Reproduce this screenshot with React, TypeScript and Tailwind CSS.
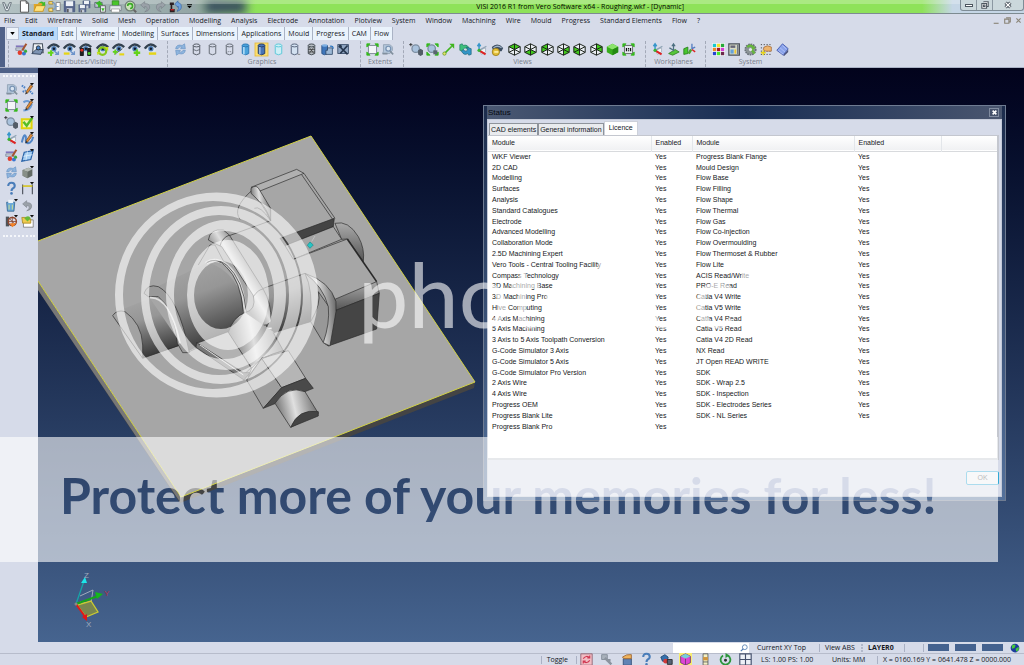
import React, { useState } from "react";

// ───────────────────────────────────────────────
// DATA
// ───────────────────────────────────────────────
const MENUS = [
  "File", "Edit", "Wireframe", "Solid", "Mesh", "Operation", "Modelling", "Analysis", "Electrode",
  "Annotation", "Plotview", "System", "Window", "Machining", "Wire", "Mould", "Progress",
  "Standard Elements", "Flow", "?",
];

const RIBBON_TABS = [
  "Standard", "Edit", "Wireframe", "Modelling", "Surfaces", "Dimensions", "Applications", "Mould",
  "Progress", "CAM", "Flow",
];

const QUICK = ["page", "folder", "merge", "save", "saveAll", "export", "print", "lens", "undo", "redo", "robot"];

const GROUPS = [
  { name: "Attributes/Visibility", width: "w-[159px]", icons: ["brush", "layer", "eyeSwap", "eyeLess", "traffic", "eyeCycle", "eyeBoth", "eyePlus", "eyeMinus"] },
  { name: "Graphics", width: "w-[193px]", icons: ["refresh", "cylWire", "cylPlain", "cylHidden", "cylBlue", "cylShade", "cylGhost", "cylGlass", "cylMesh", "cylStack", "tools"] },
  { name: "Extents", width: "w-[43px]", icons: ["extents", "zoomPart"] },
  { name: "Views", width: "w-[242px]", icons: ["zoomIn", "zoomAll", "pan", "rotate", "axes", "viewEye", "cubeTop", "cubeBottom", "cubeBack", "cubeRight", "cubeLeft", "cubeRear", "cubeFull", "scale"] },
  { name: "Workplanes", width: "w-[60px]", icons: ["axes", "planeGreen", "planeFlip"] },
  { name: "System", width: "w-[94px]", icons: ["palette", "calc", "gear", "gridHand", "book"] },
];

const SIDE_ICONS = [
  "zoomPart", "penDots", "extents", "penArc", "zoomIn", "check", "axes", "penCurve", "brush", "sheet",
  "refresh", "solid", "help", "measure", "bin", "undo", "wheel", "openPage",
];

const STATUS_ICONS = ["stamp", "select", "handBox", "help", "gems", "cubePink", "ruler", "spin", "cross"];

const LEFT_MODULES = [
  "WKF Viewer", "2D CAD", "Modelling", "Surfaces", "Analysis", "Standard Catalogues", "Electrode",
  "Advanced Modelling", "Collaboration Mode", "2.5D Machining Expert",
  "Vero Tools - Central Tooling Facility", "Compass Technology", "3D Machining Base",
  "3D Machining Pro", "Hive Computing", "4 Axis Machining", "5 Axis Machining",
  "3 Axis to 5 Axis Toolpath Conversion", "G-Code Simulator 3 Axis", "G-Code Simulator 5 Axis",
  "G-Code Simulator Pro Version", "2 Axis Wire", "4 Axis Wire", "Progress OEM",
  "Progress Blank Lite", "Progress Blank Pro",
];

const RIGHT_MODULES = [
  "Progress Blank Flange", "Mould Design", "Flow Base", "Flow Filling", "Flow Shape", "Flow Thermal",
  "Flow Gas", "Flow Co-injection", "Flow Overmoulding", "Flow Thermoset & Rubber", "Flow Lite",
  "ACIS Read/Write", "PRO-E Read", "Catia V4 Write", "Catia V5 Write", "Catia V4 Read",
  "Catia V5 Read", "Catia V4 2D Read", "NX Read", "JT Open READ WRITE", "SDK", "SDK - Wrap 2.5",
  "SDK - Inspection", "SDK - Electrodes Series", "SDK - NL Series",
];

// ───────────────────────────────────────────────
// ICON PARTS
// ───────────────────────────────────────────────
const eye = (
  <>
    <path d="M1 7Q8-1 15 6L14 10Q8 13 3 9Z" fill="#dbe6f2" />
    <path d="M1 7Q7-2 15 5" fill="none" stroke="#33414f" strokeWidth="3" />
    <circle cx="8.5" cy="7" r="3.2" fill="#4e7db5" />
    <circle cx="8.5" cy="7" r="1.5" fill="#101c2c" />
  </>
);
const cylinder = (fill: string, line: string, extra?: React.ReactNode) => (
  <>
    <path d="M4 3v10q4 3 8 0V3" fill={fill} stroke={line} strokeWidth="1.2" />
    <ellipse cx="8" cy="3" rx="4" ry="1.8" fill={fill} stroke={line} strokeWidth="1.2" />
    {extra}
  </>
);
const cube = (face: string) => (
  <>
    <path d="M8 1L15 4.5V11.5L8 15L1 11.5V4.5Z" fill="#e9edf2" />
    <path d={face} fill="#41c91c" />
    <path d="M8 1L15 4.5V11.5L8 15L1 11.5V4.5ZM1 4.5L8 8L15 4.5M8 8V15M1 11.5L8 8L15 11.5M8 1V8" fill="none" stroke="#1b221b" strokeWidth="1.2" />
  </>
);
const lens = (
  <>
    <path d="M10 10L14 14" stroke="#586674" strokeWidth="3" />
    <circle cx="7" cy="7" r="4.6" fill="#a9c2dd" stroke="#7b8da0" strokeWidth="1.6" />
  </>
);
const corners = <path d="M1 1h4L1 5ZM15 1v4L11 1ZM1 15v-4L5 15ZM15 15h-4L15 11Z" fill="#35b81e" stroke="#35b81e" />;
const pencil = (
  <>
    <path d="M6 11L12 2L14.5 4L8 12.5Z" fill="#e08a35" stroke="#5b432b" strokeWidth=".8" />
    <path d="M6 11L5 14L8 12.5Z" fill="#222" />
  </>
);
const caret = <path d="M11 0h5L13.5 3Z" fill="#111" />;
const disk = (
  <>
    <rect x="1" y="1" width="14" height="14" rx="1" fill="#55658a" />
    <rect x="3.5" y="1.5" width="9" height="6" fill="#eef2f7" />
    <rect x="4.5" y="10" width="7" height="5" fill="#c5cbd6" />
    <path d="M6 11v4" stroke="#333" strokeWidth="1.5" />
  </>
);

const ICONS: Record<string, React.ReactNode> = {
  page: <path d="M3 1h7l3 3v11H3ZM10 1v3h3" fill="#fff" stroke="#555" strokeWidth="1.2" />,
  folder: (
    <>
      <path d="M1 5h5l1-2h6v11H1Z" fill="#e0a727" />
      <path d="M4 7h11l-3 7H1Z" fill="#ffe27a" stroke="#b98517" strokeWidth=".8" />
      <path d="M7 4q3-4 6-1l2-1v5H10l2-2q-2-2-5-1Z" fill="#3fbb2a" />
    </>
  ),
  merge: (
    <>
      <path d="M1 2h5v3H1ZM1 10h5v4H1Z" fill="#ffe07a" stroke="#a6841d" />
      <path d="M10 3h5v10h-5Z" fill="#fff" stroke="#777" />
      <path d="M5 3q4 0 4 5q0 4-4 4M8 8h5" fill="none" stroke="#7c9cc4" strokeWidth="1.5" />
    </>
  ),
  save: disk,
  saveAll: (
    <>
      <g transform="translate(5 0) scale(.68)">{disk}</g>
      <g transform="translate(0 5) scale(.68)">{disk}</g>
    </>
  ),
  export: (
    <>
      <path d="M1 3h9v6H1Z" fill="#b9c1cc" stroke="#52606f" />
      <path d="M2 4l5-3 4 5H8v3H5V6Z" fill="#39b725" />
      <path d="M8 7h6v8H8Z" fill="#e9edf0" stroke="#555" />
      <path d="M9 10h4l-2 4Z" fill="#39b725" />
    </>
  ),
  print: (
    <>
      <path d="M4 1h8v6H4Z" fill="#49c52b" stroke="#348b20" />
      <path d="M1 7h14v6H1Z" fill="#e7eaee" stroke="#737b85" />
      <path d="M3 11h10v4H3Z" fill="#fff" stroke="#888" strokeWidth=".8" />
    </>
  ),
  lens: (
    <>
      <path d="M11 11L15 15" stroke="#666" strokeWidth="2.5" />
      <circle cx="7.5" cy="7.5" r="6" fill="#c9e2b8" stroke="#728078" strokeWidth="1.6" />
      <path d="M4.5 7.5a3 3 0 1 1 3 3" fill="none" stroke="#3ba827" strokeWidth="2" />
    </>
  ),
  undo: <path d="M2 6L7 2V4.5Q14 4 13 10Q12 14 7 14.5Q11 12 10 9.5Q9 8 7 8V10.5Z" fill="#9aa1a8" stroke="#70777f" strokeWidth=".6" />,
  redo: <path d="M14 6L9 2V4.5Q2 4 3 10Q4 14 9 14.5Q5 12 6 9.5Q7 8 9 8V10.5Z" fill="#9aa1a8" stroke="#70777f" strokeWidth=".6" />,
  robot: (
    <>
      <path d="M1 3h5v3H4v5h3v4H1v-4h1V6H1Z" fill="#2b1f22" />
      <path d="M2 12h4" stroke="#d22" strokeWidth="1.5" />
      <path d="M7 5L11 1V3Q16 4 15 10Q14 13 10 14Q13 10 11 7.5V9Z" fill="#6fa0dd" stroke="#285a9d" strokeWidth=".7" />
    </>
  ),
  brush: (
    <>
      <path d="M1 3h10v2H1Z" fill="#8075bb" />
      <path d="M1 6h10v3H1Z" fill="#ccd2de" stroke="#7d8798" />
      <path d="M14 1L9 9" stroke="#a4532f" strokeWidth="2.5" />
      <circle cx="6" cy="12" r="2.8" fill="#e33c2c" />
      <circle cx="11" cy="13" r="2.4" fill="#3a74d0" />
      <circle cx="13" cy="10" r="1.9" fill="#39a93b" />
    </>
  ),
  layer: (
    <>
      <path d="M3 1h11l1 11H2Z" fill="#eef2f6" stroke="#47515e" strokeWidth="1.3" />
      <path d="M1 13L6 8h9l-3 6Z" fill="#7e93b3" stroke="#26364f" />
      <circle cx="9" cy="6" r="2.5" fill="#4d84c6" stroke="#222" />
    </>
  ),
  eyeSwap: (
    <>
      {eye}
      <path d="M1 12h7M5 9v7" stroke="#63d31c" strokeWidth="2.4" />
      <path d="M9 10l5 4M14 10v4h-4" fill="none" stroke="#6d94cb" strokeWidth="1.6" />
    </>
  ),
  eyeLess: (
    <>
      {eye}
      <path d="M1 13h7" stroke="#e5d515" strokeWidth="2.8" />
      <path d="M9 10l5 4M14 10v4h-4" fill="none" stroke="#6d94cb" strokeWidth="1.6" />
    </>
  ),
  traffic: (
    <>
      {eye}
      <rect x="1" y="6" width="5" height="10" rx="1" fill="#1d2020" />
      <rect x="10" y="6" width="5" height="10" rx="1" fill="#1d2020" />
      <circle cx="3.5" cy="9" r="1.8" fill="#e32d20" />
      <circle cx="12.5" cy="13" r="1.8" fill="#46cd29" />
    </>
  ),
  eyeCycle: (
    <>
      {eye}
      <circle cx="8" cy="10" r="4.5" fill="none" stroke="#86c81a" strokeWidth="2.8" />
      <path d="M10 5h5v5ZM1 11h5l-4 4Z" fill="#c2dd1b" />
    </>
  ),
  eyeBoth: (
    <>
      {eye}
      <path d="M3 14L13 7" stroke="#555" />
      <path d="M1 11h6M4 8v6" stroke="#63d31c" strokeWidth="2.2" />
      <path d="M9 14h6" stroke="#e5d515" strokeWidth="2.6" />
    </>
  ),
  eyePlus: <>{eye}<path d="M11 8v8M7 12h8" stroke="#63d31c" strokeWidth="2.8" /></>,
  eyeMinus: <>{eye}<path d="M6 13h9" stroke="#e5d515" strokeWidth="3" /></>,
  refresh: (
    <>
      <path d="M2 7Q3 1 10 3L13 1L14 7H8L10 5Q6 4 5 7Z" fill="#8eb4de" stroke="#5685b9" strokeWidth=".6" />
      <path d="M14 9Q13 15 6 13L3 15L2 9H8L6 11Q10 12 11 9Z" fill="#8eb4de" stroke="#5685b9" strokeWidth=".6" />
    </>
  ),
  cylWire: cylinder("none", "#555c66", <path d="M4 8q4 3 8 0" fill="none" stroke="#555c66" />),
  cylPlain: cylinder("none", "#656b75"),
  cylHidden: cylinder("none", "#656b75", <path d="M4 12q4-3 8 0" fill="none" stroke="#656b75" strokeDasharray="1.5 1" />),
  cylBlue: cylinder("#4aa3db", "#2c78b5", <path d="M6 5v9" stroke="#b9e1fa" strokeWidth="1.8" />),
  cylShade: (
    <>
      <rect width="16" height="16" fill="#fbdf72" stroke="#e3b739" />
      {cylinder("#4774b6", "#263e69", <path d="M6 5v9" stroke="#a7c6ee" strokeWidth="1.6" />)}
    </>
  ),
  cylGhost: cylinder("#cdeff6", "#5cc7d8"),
  cylGlass: cylinder("#d3e1f1", "#56637a", <path d="M12 14h3" stroke="#777" />),
  cylMesh: cylinder("#b6bbc1", "#424a52", <path d="M5 5l6 8M11 5l-6 8M4 8h8M4 11h8" stroke="#333" strokeWidth=".8" />),
  cylStack: (
    <>
      <path d="M1 3v10q3 3 7 0V3Z" fill="#3f76bb" stroke="#274f83" />
      <ellipse cx="4.5" cy="3" rx="3.5" ry="1.5" fill="#7eafe2" />
      <path d="M8 6h6v8H6V9h2Z" fill="#9db8d6" stroke="#2d4666" />
      <path d="M11 4q4-1 4 3" fill="none" stroke="#2872bd" strokeWidth="1.5" />
    </>
  ),
  tools: (
    <>
      <rect x="1" y="2" width="13" height="11" fill="#90a5c1" stroke="#334764" />
      <path d="M3 4l10 10M13 3L4 13" stroke="#25354d" strokeWidth="2" />
      <circle cx="4" cy="4" r="2" fill="#26364c" />
    </>
  ),
  extents: <><path d="M3 3h10v10H3Z" fill="#f4f6f9" stroke="#6b7885" />{corners}</>,
  zoomPart: (
    <>
      <path d="M3 2h7q5 1 4 7l-3 4H2L3 10Z" fill="#b3c6da" stroke="#8e9fb2" />
      <circle cx="9" cy="7" r="3" fill="#dae5f1" stroke="#7691b2" strokeWidth="1.5" />
      <path d="M11 10l4 4M2 13h6" stroke="#82909e" strokeWidth="2" />
    </>
  ),
  zoomIn: (
    <>
      {lens}
      <path d="M1 0v4M-1 2h4" stroke="#222" />
      <path d="M10 9l3-2 3 2v5l-3 2-3-2Z" fill="#525c67" />
    </>
  ),
  zoomAll: <>{lens}{corners}<path d="M9 9h5v5H9Z" fill="#596570" /></>,
  pan: (
    <>
      <path d="M3 13L12 4" stroke="#3fb51e" strokeWidth="2" />
      <path d="M9 1h6v6Z" fill="#3fb51e" />
      <circle cx="3" cy="13" r="2" fill="#e4e46f" stroke="#6a9b20" />
    </>
  ),
  rotate: (
    <>
      <path d="M1 2v7l6 2-2-3q3-4 6 1l2-1Q11 1 5 3L4 1Z" fill="#3ec07c" stroke="#1d7762" strokeWidth=".8" />
      <path d="M15 14V7L9 5l2 3q-2 4-6 0l-2 2q3 6 8 3l1 2Z" fill="#3295c8" stroke="#1d6376" strokeWidth=".8" />
    </>
  ),
  axes: (
    <>
      <path d="M5 9L13 6L13 11L8 14Z" fill="#f2f5f8" stroke="#a4afbd" />
      <path d="M5 9V2M3 4L5 1L7 4" fill="none" stroke="#3796ca" strokeWidth="1.8" />
      <path d="M5 9L14 4" stroke="#8fa3b5" strokeWidth="1.6" />
      <path d="M5 9L13 14" stroke="#d22" strokeWidth="2.5" />
      <circle cx="5" cy="9" r="2" fill="#37b634" />
    </>
  ),
  viewEye: (
    <>
      <path d="M1 5Q8-2 15 6L13 10H3Z" fill="#3b4c60" />
      <path d="M3 6q5-4 10 0" fill="none" stroke="#9eb3c8" strokeWidth="1.5" />
      <circle cx="6" cy="11" r="4.5" fill="#e3bf3a" stroke="#967713" />
      <path d="M4 11h5" stroke="#fff1a4" strokeWidth="2" />
    </>
  ),
  cubeTop: cube("M8 1L15 4.5L8 8L1 4.5Z"),
  cubeBottom: cube("M1 11.5L8 8L15 11.5L8 15Z"),
  cubeBack: cube("M1 4.5L8 1V8L1 11.5Z"),
  cubeRight: cube("M8 8L15 4.5V11.5L8 15Z"),
  cubeLeft: cube("M1 4.5L8 8V15L1 11.5Z"),
  cubeRear: cube("M8 1L15 4.5V11.5L8 8Z"),
  cubeFull: (
    <>
      <path d="M8 1L15 4.5V11.5L8 15L1 11.5V4.5Z" fill="#36ac1b" />
      <path d="M8 1L15 4.5L8 8L1 4.5Z" fill="#8be36b" />
      <path d="M8 8L15 4.5V11.5L8 15Z" fill="#248a11" />
    </>
  ),
  scale: (
    <>
      <path d="M3 3h10v10H3Z" fill="#e5ebef" stroke="#555" />
      {corners}
      <path d="M5.5 6v4M10.5 6v4M8 6v2M8 9v1" stroke="#111" strokeWidth="1.5" />
    </>
  ),
  planeGreen: (
    <>
      <path d="M2 13L10 8L15 11L7 15Z" fill="#56c63a" stroke="#307f23" />
      <path d="M8 10V2M6 4l2-3 2 3M8 9L3 6" fill="none" stroke="#4d7080" strokeWidth="1.5" />
    </>
  ),
  planeFlip: (
    <>
      <path d="M1 7l5-2v8l-5 1Z" fill="#48c82e" stroke="#267b1c" />
      <path d="M7 13l3-5" stroke="#48a82e" strokeWidth="3" />
      <path d="M11 8V1M11 7l4-2" stroke="#537cc0" strokeWidth="1.6" />
      <path d="M11 8l4 3" stroke="#d22" strokeWidth="1.8" />
    </>
  ),
  palette: (
    <>
      <rect width="16" height="16" fill="#f0f2f4" />
      <path d="M1 1h4v4H1Z" fill="#16c8d0" /><path d="M6 1h4v4H6Z" fill="#eee52e" /><path d="M11 1h4v4h-4Z" fill="#25a838" />
      <path d="M1 6h4v4H1Z" fill="#e98927" /><path d="M6 6h4v4H6Z" fill="#a31b25" /><path d="M11 6h4v4h-4Z" fill="#d63ad6" />
      <path d="M1 11h4v4H1Z" fill="#2542d2" /><path d="M6 11h4v4H6Z" fill="#46e52b" /><path d="M11 11h4v4h-4Z" fill="#6b284b" />
    </>
  ),
  calc: (
    <>
      <path d="M1 1h13v14H1Z" fill="#d8dcc8" stroke="#4a505b" strokeWidth="1.5" />
      <path d="M3 3h6v3H3Z" fill="#666677" />
      <path d="M3 8h4v5H3Z" fill="#65a2d9" />
      <path d="M8 8h2v5H8Z" fill="#efc52c" />
      <path d="M12 2v12" stroke="#747b86" strokeWidth="2" />
    </>
  ),
  gear: (
    <>
      <circle cx="8" cy="8" r="6.5" fill="#8b9396" stroke="#687078" strokeDasharray="2 1" strokeWidth="2" />
      <path d="M4 5q4-4 8 1l-3 2 4 5" fill="none" stroke="#65b53c" strokeWidth="3" />
      <circle cx="8" cy="8" r="2" fill="#e5e9ed" />
    </>
  ),
  gridHand: (
    <>
      <path d="M1 2h14M1 6h14M1 10h14M1 14h14" stroke="#333" strokeDasharray="1.5 2" />
      <path d="M5 5q4-3 9 0v5H7L4 8Z" fill="#edb36c" stroke="#996235" strokeWidth=".8" />
      <path d="M4 9v6M1 12h6" stroke="#e7d315" strokeWidth="1.7" />
    </>
  ),
  book: (
    <>
      <path d="M8 1L15 7L9 15L1 9Z" fill="#8aa3ea" stroke="#3b53aa" />
      <path d="M5 6l6 5M8 3l5 5M3 9l6 5" stroke="#b6c5f7" />
      <path d="M9 15L15 8v3l-5 5Z" fill="#48507a" />
    </>
  ),
  penDots: <><path d="M1 3l4 3M2 11l4-2M11 10l4 4" stroke="#4f83c5" strokeWidth="2.5" strokeDasharray="2 1" />{pencil}{caret}</>,
  penArc: <><path d="M3 4q7-4 10 3q-2 7-10 7" fill="none" stroke="#6b9bd5" strokeWidth="2.5" />{pencil}{caret}</>,
  penCurve: <><path d="M1 13q3-13 5-7q-1 10 5 7q3-2 4-7" fill="none" stroke="#5286c6" strokeWidth="2.5" />{pencil}{caret}</>,
  check: (
    <>
      <path d="M1 4h12v11H1Z" fill="#eff4b4" stroke="#e0d40c" strokeWidth="2.5" />
      <path d="M3 7l4 5 7-10" fill="none" stroke="#54bd25" strokeWidth="3" />
      {caret}
    </>
  ),
  sheet: (
    <>
      <path d="M4 4l11-2-3 11-11 2Z" fill="#a4cdf2" stroke="#2963a8" strokeWidth="1.5" />
      <path d="M8 3L6 14M3 9l11-2" stroke="#e2f2fd" />
      {caret}
    </>
  ),
  solid: (
    <>
      <path d="M2 5l7-3 5 2v8l-6 3-6-3Z" fill="#626a64" />
      <path d="M2 5l7-3 5 2-6 3Z" fill="#b4bab4" />
      <path d="M2 5l6 2v8l-6-3Z" fill="#878f88" />
      {caret}
    </>
  ),
  help: (
    <>
      <path d="M4 5q0-4 4-4t4 4q0 2-2.5 3Q8 9 8 11" fill="none" stroke="#4a7db9" strokeWidth="2.6" />
      <circle cx="8" cy="14" r="1.6" fill="#4a7db9" />
    </>
  ),
  measure: <><path d="M2 3v12M14 3v12" stroke="#555b66" strokeWidth="1.5" /><path d="M2 5h12" stroke="#d5c322" strokeWidth="2" />{caret}</>,
  bin: (
    <>
      <path d="M2 4h10l-1 11H3Z" fill="#68a7d8" stroke="#356891" />
      <path d="M4 1h6v4H4Z" fill="#eff5f8" />
      <path d="M5 7v6M9 7v6" stroke="#e6ed80" />
      {caret}
    </>
  ),
  wheel: (
    <>
      <path d="M1 2h4v12H1Z" fill="#4d5359" />
      <circle cx="9" cy="8" r="5" fill="none" stroke="#94492e" strokeWidth="1.8" />
      <path d="M4 8h10M9 2v12M5 4l8 8" stroke="#854732" />
      <path d="M6 10h8l-5 5Z" fill="#f78324" />
      {caret}
    </>
  ),
  openPage: (
    <>
      <path d="M3 6h12v9H3Z" fill="#fff" stroke="#777" />
      <path d="M1 3h6l2 2h3v5H2Z" fill="#efcb4e" stroke="#a98822" />
      <path d="M4 4q5-5 8 0l-4 4Z" fill="#67b939" />
      {caret}
    </>
  ),
  stamp: (
    <>
      <path d="M1 1h14v14H1Z" fill="#f1bdc4" stroke="#8a5a6a" />
      <path d="M4 7q4-5 8-1M12 9q-4 5-8 1M12 3v3H9M4 13v-3h3" fill="none" stroke="#d13852" strokeWidth="1.4" />
    </>
  ),
  select: (
    <>
      <path d="M2 2h7v6H2Z" fill="#a9b1bc" stroke="#7e8794" />
      <path d="M6 6l8 8M8 9h5" stroke="#8c949f" strokeWidth="3" />
    </>
  ),
  handBox: (
    <>
      <path d="M4 7h10v8H4Z" fill="#6083b5" stroke="#304b74" />
      <path d="M3 5q5-4 11-3v5H5Z" fill="#efb35c" stroke="#98602e" />
    </>
  ),
  gems: (
    <>
      <path d="M1 5l5-3 4 3-1 6-6-1Z" fill="#3370ae" stroke="#1f416b" />
      <circle cx="7" cy="10" r="3" fill="#d13b3b" />
      <path d="M9 8h6v6H9Z" fill="#556376" stroke="#222" />
    </>
  ),
  cubePink: (
    <>
      <rect width="16" height="16" fill="#f7ed71" />
      <path d="M8 1l6 3v8l-6 3-6-3V4Z" fill="#df45d5" stroke="#69376b" />
      <path d="M2 4l6 3 6-3-6-3Z" fill="#77ceda" />
      <path d="M8 7v8" stroke="#69376b" />
    </>
  ),
  ruler: (
    <>
      <path d="M5 1h6v14H5Z" fill="#f3f0c5" stroke="#555" />
      <path d="M5 5h6v4H5Z" fill="#cf963f" />
      <path d="M5 11h6" stroke="#555" />
    </>
  ),
  spin: (
    <>
      <path d="M5 3a6 6 0 1 0 6 0" fill="none" stroke="#2d963b" strokeWidth="2.2" />
      <path d="M8 0v6l5-3Z" fill="#2d963b" />
      <circle cx="8" cy="9" r="1.8" fill="#333" />
    </>
  ),
  cross: <path d="M1 1h14v14H1ZM8 1v14M1 8h14" fill="#edf1f7" stroke="#44506b" strokeWidth="1.4" />,
  globe: (
    <>
      <circle cx="8" cy="8" r="7" fill="#1c3c9c" />
      <path d="M3 4q4-3 6 0l-2 4-4 1ZM9 9l5-3v5l-4 3Z" fill="#46c93b" />
    </>
  ),
};

function IconButton({ name }: { name: string }) {
  return (
    <button type="button" aria-label={name} className="flex flex-1 items-center justify-center">
      <svg viewBox="0 0 16 16" className="size-[13px] shrink-0 overflow-visible" aria-hidden="true">
        {ICONS[name]}
      </svg>
    </button>
  );
}

function Separator() {
  return <span className="h-2 w-px shrink-0 bg-[#aab1c4]" />;
}

// ───────────────────────────────────────────────
// TOP BARS
// ───────────────────────────────────────────────
function TitleBar() {
  return (
    <header className="relative flex h-[14px] shrink-0 items-center overflow-hidden border-b border-[#7d8b91] bg-[#8ee259]">
      <div className="absolute inset-0 bg-linear-to-r from-[#b3c1c3] from-0% via-[#93a5a5] via-19% to-transparent to-25%" />
      <div className="absolute inset-y-0 left-[20%] w-[4%] bg-[#33485b] blur-[5px]" />
      <div className="absolute inset-y-0 right-0 w-[10%] bg-linear-to-r from-transparent to-[#c5d6e6] to-30%" />
      <div className="absolute inset-x-0 top-0 h-1 bg-white/25" />
      <div className="relative flex w-[200px] items-center">
        <svg viewBox="0 0 16 16" className="mr-1 ml-px h-[10px] w-[12px]" aria-hidden="true">
          <path d="M1 1l5 13h4l5-13h-3l-4 10-4-10Z" fill="#e9eef3" stroke="#4f5964" strokeWidth="1.2" />
        </svg>
        {QUICK.map((q) => <IconButton key={q} name={q} />)}
        <button type="button" aria-label="Customise quick access" className="mr-2 ml-1">
          <svg viewBox="0 0 6 6" className="size-[5px]"><path d="M0 0h6v1H0ZM0 2h6L3 5Z" /></svg>
        </button>
      </div>
      <h1 className="relative ml-auto leading-[12px] whitespace-nowrap text-black">
        VISI 2016 R1 from Vero Software x64 - Roughing.wkf - [Dynamic]
      </h1>
      <div className="relative flex w-[340px] justify-end self-start">
        <div className="flex h-[11px] overflow-hidden rounded-b-[3px] border border-t-0 border-[#7e8c96] bg-[#cbd8dc] text-[#4c565f]">
          <button type="button" aria-label="Minimise" className="flex w-4 items-center justify-center border-r border-[#8b98a2]">
            <span className="h-[3px] w-2 border border-[#4c565f] bg-white" />
          </button>
          <button type="button" aria-label="Restore" className="flex w-4 items-center justify-center border-r border-[#8b98a2]">
            <svg viewBox="0 0 10 10" className="size-2"><path d="M3 1h6v6H7M1 3h6v6H1ZM3 5h2v2H3Z" fill="#fff" stroke="currentColor" strokeWidth="1.3" /></svg>
          </button>
          <button type="button" aria-label="Close" className="flex w-[30px] items-center justify-center">
            <svg viewBox="0 0 10 10" className="size-2"><path d="M2 2l6 6M8 2l-6 6" stroke="currentColor" strokeWidth="4" /><path d="M2 2l6 6M8 2l-6 6" stroke="#fff" strokeWidth="1.5" /></svg>
          </button>
        </div>
      </div>
    </header>
  );
}

function MenuBar() {
  return (
    <nav className="flex h-[13px] shrink-0 items-center gap-[10px] bg-[#d6dbe9] pl-1">
      {MENUS.map((m) => (
        <button key={m} type="button" className="leading-[12px] whitespace-nowrap">{m}</button>
      ))}
      <div className="mr-[2px] ml-auto flex gap-1 text-[#8b8578]">
        {["M1 9h7", "M3 1h6v6H7M1 3h6v6H1Z", "M2 2l6 6M8 2l-6 6"].map((d, i) => (
          <button key={d} type="button" aria-label={["Minimise document", "Restore document", "Close document"][i]}>
            <svg viewBox="0 0 10 10" className="size-[7px]"><path d={d} fill="none" stroke="currentColor" strokeWidth="1.6" /></svg>
          </button>
        ))}
      </div>
    </nav>
  );
}

function Ribbon() {
  const [active, setActive] = useState("Standard");
  return (
    <section className="shrink-0 border-b border-[#aab2c5] bg-[#d6dbe9] pl-[6px] shadow-[inset_5px_0_0_#4f6188]">
      <div className="flex h-[13px]">
        <button type="button" aria-label="Toolbar menu" className="flex w-[13px] items-center justify-center border border-[#b7bfd2] bg-[#eef3fa]">
          <svg viewBox="0 0 6 4" className="h-[3px] w-[5px]"><path d="M0 0h6L3 4Z" /></svg>
        </button>
        {RIBBON_TABS.map((t) => (
          <button
            key={t}
            type="button"
            onClick={() => setActive(t)}
            className={`border-r px-[3px] leading-[12px] ${
              t === active ? "border-[#9fc3e6] bg-[#b9dafa] font-bold" : "border-[#aab3c5] bg-[#eaf3fc]"
            }`}
          >
            {t}
          </button>
        ))}
      </div>
      <div className="flex h-[27px] pt-px pl-[2px]">
        {GROUPS.map((g) => (
          <div key={g.name} className={`${g.width} border-l border-dashed border-[#a3a9b8] pr-2 pl-1`}>
            <div className="flex h-4">
              {g.icons.map((n) => <IconButton key={n} name={n} />)}
            </div>
            <p className="text-center leading-[10px] text-[#7a7f8b]">{g.name}</p>
          </div>
        ))}
      </div>
    </section>
  );
}

function SideBar() {
  return (
    <aside className="w-[38px] shrink-0 border-t-[5px] border-[#4f6188] bg-[#d6dbe9] px-[3px]">
      <div className="mt-[2px] mb-1 border-t-2 border-dotted border-[#f5f7fb]" />
      <div className="grid h-[149px] grid-cols-2">
        {SIDE_ICONS.map((n) => <IconButton key={n} name={n} />)}
      </div>
      <div className="mt-[5px] border-t-2 border-dotted border-[#f5f7fb]" />
    </aside>
  );
}

// ───────────────────────────────────────────────
// 3D VIEW
// ───────────────────────────────────────────────
function Scene() {
  return (
    <svg viewBox="38 68 986 574" preserveAspectRatio="xMinYMin slice" className="block size-full" role="img" aria-label="Shaded model on plate">
      <defs>
        <linearGradient id="bar" x1="0" y1="0" x2=".35" y2="1">
          <stop offset="0" stopColor="#a9a9a9" />
          <stop offset=".45" stopColor="#969696" />
          <stop offset="1" stopColor="#3d3d3d" />
        </linearGradient>
        <linearGradient id="shine" x1="0" y1=".3" x2="1" y2=".1">
          <stop offset="0" stopColor="#777" />
          <stop offset=".4" stopColor="#e0e0e0" />
          <stop offset="1" stopColor="#5d5d5d" />
        </linearGradient>
        <linearGradient id="arm" gradientUnits="userSpaceOnUse" x1="385" y1="440" x2="450" y2="400">
          <stop offset="0" stopColor="#8a8a8a" />
          <stop offset=".5" stopColor="#dedede" />
          <stop offset="1" stopColor="#888" />
        </linearGradient>
        <linearGradient id="edge" x1="0" y1="0" x2="0" y2="1">
          <stop offset="0" stopColor="#aaa" />
          <stop offset="1" stopColor="#555" />
        </linearGradient>
      </defs>

      {/* Plate */}
      <path d="M38 281L181 497L475 382L474 388L180 503L38 290Z" fill="#444" />
      <path d="M38 281L181 497L180 502L38 290Z" fill="#777" />
      <path d="M38 241L311 136L475 382L181 497L38 281Z" fill="#a6a6a6" />
      <path d="M38 241L311 136L475 382L181 497L38 281" fill="none" stroke="#d3d244" />

      {/* Part, drawn at three times its size on the plate */}
      <g transform="translate(100 130) scale(.3333)" stroke="#2a2a2a" strokeWidth="2" strokeLinejoin="round">
        <path d="M705 280Q745 270 775 320Q795 355 790 395L742 327L725 328Z" fill="url(#edge)" />
        <path d="M470 185L605 130L703 265L545 322L512 272L512 235Z" fill="#a6a6a6" stroke="none" />
        <path d="M453 172L590 118L612 130L470 187Z" fill="#b0b0b0" />
        <path d="M605 134L698 268M612 130L705 265" />
        <path d="M540 325L703 265L700 290L555 347Z" fill="#444" />
        <path d="M555 347L700 290L725 328L580 388Z" fill="#a6a6a6" />
        <path d="M420 268Q395 235 455 182" fill="none" />
        <path d="M453 175Q470 160 480 182L512 235L512 272Q490 220 453 190Z" fill="url(#shine)" />
        <path d="M463 235Q480 225 512 272M480 215Q500 235 512 272" fill="none" />
        <path d="M385 318L512 272" fill="none" />

        <path d="M55 543L150 505L245 645L128 685L38 560Z" fill="url(#bar)" stroke="none" />
        <path d="M175 468L325 397Q420 430 435 545L385 605L262 665Z" fill="url(#bar)" stroke="none" />
        <path d="M38 557Q50 538 75 545Q125 580 128 645L128 685Z" fill="#a2a2a2" />
        <path d="M128 685L235 647M262 668L385 608" fill="none" />
        <path d="M132 490Q142 460 175 470Q235 500 268 668L248 668L232 640Q225 540 175 500L145 500Z" fill="#999" />
        <path d="M150 503Q210 500 240 640" fill="none" stroke="#ddd" strokeWidth="5" />
        <path d="M295 405L330 345L345 345L375 402Q345 380 318 400" fill="#a9a9a9" />
        <path d="M318 400Q345 380 380 405Q430 450 435 545" fill="none" stroke="#d8d8d8" strokeWidth="9" />
        <path d="M318 400Q345 380 380 405Q430 450 439 545M322 396Q352 382 378 410Q422 450 430 545" fill="none" />

        <path d="M460 497Q470 480 490 475L615 430Q640 480 632 575L515 610L500 590Z" fill="url(#bar)" />
        <path d="M325 330Q330 295 370 300L388 315L490 478Q515 520 513 575Q490 600 455 572L435 548Q470 540 460 497L365 350Q340 340 325 330Z" fill="url(#arm)" />
        <path d="M360 348Q365 325 388 315M460 500Q475 478 490 477" fill="none" />
        <path d="M435 548Q460 600 515 595" fill="none" stroke="#ddd" strokeWidth="5" />

        <path d="M578 388L742 327L830 455L700 510L660 465L615 430Z" fill="#a6a6a6" stroke="none" />
        <path d="M580 388L742 327" />
        <path d="M700 510L830 455L838 490L708 541Z" fill="url(#edge)" />
        <path d="M708 541L838 490L830 597L685 648Z" fill="#454545" />
        <path d="M632 575Q665 520 655 485L690 535L685 648L670 638Z" fill="#989898" />
        <path d="M615 430Q690 455 708 515L708 545L690 648L670 638Q690 580 685 530Q670 470 615 430Z" fill="url(#shine)" />
        <path d="M742 327L830 455" fill="none" strokeWidth="5" />

        <path d="M290 640L385 605L455 712L425 740Z" fill="#b2b2b2" />
        <path d="M290 638L430 728L450 728L432 750L288 652Z" fill="#777" />
        <path d="M300 645L430 735" stroke="#ddd" strokeWidth="3" />
        <path d="M385 607Q400 560 435 548L520 605L550 662Q495 675 455 712Z" fill="url(#shine)" stroke="none" />
        <path d="M385 607Q400 560 435 548M385 607L455 716M520 608L550 662" fill="none" />
        <path d="M440 750L485 685L545 773L490 835Z" fill="#9e9e9e" />
        <path d="M485 685L565 662L617 745L545 773Z" fill="#b5b5b5" />
        <path d="M455 715Q480 680 550 662L485 685L445 740Z" fill="#ccc" />
        <path d="M545 773L617 745L640 775L490 835Z" fill="#4a4a4a" />
        <path d="M525 820Q560 765 615 785L655 850L572 892Z" fill="url(#shine)" />
        <path d="M572 892Q595 835 655 845L655 858Z" fill="#444" />
        <path d="M630 336L640 345L630 355L622 346Z" fill="#27c4c4" stroke="#168d8d" />
        <path d="M635 335L645 318" stroke="#ccc" />
      </g>

      {/* Axis triad */}
      <g fill="none" strokeWidth="1.3">
        <path d="M80 596L93 590L91 603L80 602L87 610L85 617" stroke="#9faabd" strokeWidth="1" />
        <path d="M77 605L91 601L98 612L86 617Z" fill="#78864f" stroke="#cccb31" />
        <path d="M76 604L84 581" stroke="#17a5a8" />
        <path d="M81 583L85 577L87 583Z" fill="#1ee6ea" />
        <path d="M76 604L98 596" stroke="#16a51b" strokeWidth="2" />
        <path d="M95 592L103 594L97 599Z" fill="#15b81b" />
        <path d="M76 604L86 618" stroke="#e01717" strokeWidth="2" />
        <path d="M82 617L87 621L87 614Z" fill="#e01717" />
        <circle cx="76" cy="604" r="1.5" fill="#888" />
      </g>
      <g className="font-['Liberation_Sans',sans-serif] text-[8px]">
        <text x="84" y="578" fill="#9faabd">Z</text>
        <text x="104" y="596" fill="#b72d46">Y</text>
        <text x="86" y="627" fill="#9faabd">X</text>
      </g>
    </svg>
  );
}

// ───────────────────────────────────────────────
// STATUS DIALOG
// ───────────────────────────────────────────────
function StatusDialog() {
  const [tab, setTab] = useState("Licence");
  return (
    <section
      role="dialog"
      aria-label="Status"
      className="absolute top-[37px] left-[445px] w-[523px] border border-[#6f7c92] bg-linear-to-b from-[#1c2c4c] to-[#54719b] px-[3px] pb-[3px] font-['Liberation_Sans',Arial,sans-serif] leading-[10px]"
    >
      <div className="flex h-[13px] items-center justify-between bg-linear-to-r from-[#4a5872] via-[#182d53] to-[#4a566f]">
        <h2 className="pl-px text-[8px] text-[#05080f]">Status</h2>
        <button type="button" aria-label="Close status" className="mr-[3px] flex h-[9px] w-[10px] items-center justify-center border border-[#808b9f] bg-[#45516a] text-white">
          <svg viewBox="0 0 8 8" className="size-[5px]"><path d="M1 1l6 6M7 1l-6 6" stroke="currentColor" strokeWidth="2.5" /></svg>
        </button>
      </div>
      <div className="border border-[#c4cad8] bg-[#d6dbe9]">
        <div className="flex h-[15px] items-end pl-px" role="tablist">
          {["CAD elements", "General information", "Licence"].map((t) => (
            <button
              key={t}
              type="button"
              role="tab"
              aria-selected={t === tab}
              onClick={() => setTab(t)}
              className={`border border-b-0 whitespace-nowrap ${
                t === tab ? "h-[14px] border-[#cdd1da] bg-white px-1 pb-px" : "h-[12px] border-[#8f949c] bg-[#e9ebee] px-px"
              }`}
            >
              {t}
            </button>
          ))}
        </div>
        <div className="mr-[2px] h-[325px] border-t border-r-2 border-b-2 border-[#c4c7cf] bg-white">
          <table className="h-[296px] w-full table-fixed border-collapse text-left text-[#15171a]">
            <thead>
              <tr className="h-[15px] border-b border-[#d8dadd] bg-linear-to-b from-white to-[#f0f1f3]">
                <th className="w-[163px] border-r border-[#e3e6ea] p-0 pl-1 font-normal">Module</th>
                <th className="w-[41px] border-r border-[#e3e6ea] p-0 pl-1 font-normal">Enabled</th>
                <th className="w-[162px] border-r border-[#e3e6ea] p-0 pl-1 font-normal">Module</th>
                <th className="w-[87px] border-r border-[#e3e6ea] p-0 pl-1 font-normal">Enabled</th>
                <th className="p-0" />
              </tr>
            </thead>
            <tbody>
              {LEFT_MODULES.map((m, i) => (
                <tr key={m}>
                  <td className="p-0 pl-1">{m}</td>
                  <td className="p-0 pl-1">Yes</td>
                  <td className="p-0 pl-1">{RIGHT_MODULES[i]}</td>
                  <td className="p-0 pl-1">{RIGHT_MODULES[i] ? "Yes" : ""}</td>
                  <td className="p-0" />
                </tr>
              ))}
            </tbody>
          </table>
        </div>
        <div className="flex h-[36px] items-center justify-end pr-[2px]">
          <button type="button" className="h-[14px] w-[33px] rounded-[2px] border border-[#31a9d5] bg-[#eceef0] text-[#555]">OK</button>
        </div>
      </div>
    </section>
  );
}

// ───────────────────────────────────────────────
// STATUS BAR
// ───────────────────────────────────────────────
function StatusBar() {
  return (
    <footer className="h-[23px] shrink-0 overflow-hidden bg-[#d6dbe9] leading-[10px] whitespace-nowrap">
      <div className="flex h-[12px] items-center justify-end border-b border-[#b7bccb] pr-1">
        <label className="mr-2 flex h-[10px] w-[76px] items-center bg-white">
          <input type="text" aria-label="Command search" className="h-full w-full min-w-0 px-1 outline-none" />
          <svg viewBox="0 0 10 10" className="mr-px size-2 shrink-0"><path d="M1 9l3-3" stroke="#4b78b0" strokeWidth="1.5" /><circle cx="6" cy="4" r="3" fill="none" stroke="#4b78b0" /></svg>
        </label>
        <span className="w-[62px]">Current XY Top</span>
        <Separator />
        <span className="w-[41px] pl-[5px]">View ABS</span>
        <span className="mr-[5px] h-2 border-l-2 border-dotted border-[#b2b9ca]" />
        <span className="w-[36px] font-bold">LAYER0</span>
        <Separator />
        <span className="w-[18px]" />
        <Separator />
        <span className="mr-[6px] ml-1 h-[7px] w-[21px] bg-[#44628f]" />
        <span className="mr-[6px] h-[7px] w-[21px] bg-[#44628f]" />
        <span className="mr-[7px] h-[7px] w-[21px] bg-[#44628f]" />
        <svg viewBox="0 0 16 16" className="size-[10px]" aria-hidden="true">{ICONS.globe}</svg>
      </div>
      <div className="flex h-[11px] items-center justify-end">
        <Separator />
        <button type="button" className="pr-2 pl-[5px]">Toggle</button>
        <Separator />
        <div className="flex w-[178px]">
          {STATUS_ICONS.map((n) => <IconButton key={n} name={n} />)}
        </div>
        <span className="w-[77px] pl-[6px]">LS: 1.00 PS: 1.00</span>
        <span className="w-[45px]">Units: MM</span>
        <Separator />
        <span className="w-[146px] pl-[5px]">X = 0160.169 Y = 0641.478 Z = 0000.000</span>
      </div>
    </footer>
  );
}

// ───────────────────────────────────────────────
// PREVIEW WATERMARK
// ───────────────────────────────────────────────
function Watermark() {
  return (
    <svg viewBox="0 0 1024 665" preserveAspectRatio="xMinYMin slice" className="pointer-events-none absolute inset-0 size-full font-[Lato,sans-serif]">
      <defs>
        <mask id="slogan">
          <rect width="1024" height="665" fill="#fff" />
          <text x="60" y="514" fill="#000" className="text-[50px] font-bold">Protect more of your memories for less!</text>
        </mask>
      </defs>
      <g fill="#fff" fillOpacity=".6">
        <rect y="437" width="998" height="125" mask="url(#slogan)" />
        <path
          fillRule="evenodd"
          d="M115 295a101 102 0 1 0 203 0a101 102 0 1 0-203 0ZM123 295a90 94 0 1 1 180 0a90 94 0 1 1-180 0ZM141 295a80 89 0 1 0 160 0a80 89 0 1 0-160 0ZM149 295a70 80 0 1 1 140 0a70 80 0 1 1-140 0ZM166 295a60 75 0 1 0 120 0a60 75 0 1 0-120 0ZM174 295a50 64 0 1 1 100 0a50 64 0 1 1-100 0ZM187 295a41 55 0 1 0 82 0a41 55 0 1 0-82 0ZM194 295a27 34 0 1 1 54 0a27 34 0 1 1-54 0Z"
        />
        <text x="358" y="328" className="text-[90px]">photobucket</text>
      </g>
    </svg>
  );
}

export default function App() {
  return (
    <div className="relative flex h-screen min-h-[600px] flex-col overflow-hidden bg-[#d6dbe9] font-['Open_Sans','Noto_Sans',sans-serif] text-[7px] text-[#15181f]">
      <TitleBar />
      <MenuBar />
      <Ribbon />
      <div className="flex min-h-0 flex-1">
        <SideBar />
        <main className="relative min-w-0 flex-1 overflow-hidden bg-linear-to-b from-[#02031c] to-[#46648f]">
          <Scene />
          <StatusDialog />
        </main>
      </div>
      <StatusBar />
      <Watermark />
    </div>
  );
}
